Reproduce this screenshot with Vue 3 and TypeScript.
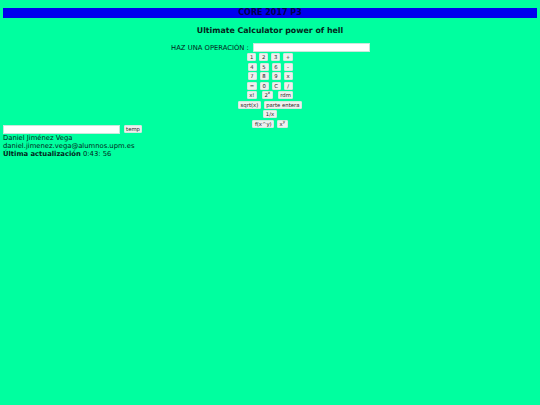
<script setup lang="ts">
const rows: string[][] = [
  ['1', '2', '3', '+'],
  ['4', '5', '6', '-'],
  ['7', '8', '9', 'x'],
  ['=', '0', 'C', '/'],
]
const rowsB: string[][] = [['sqrt(x)', 'parte entera'], ['1/x']]
</script>

<template>
  <main class="page">
    <h1 class="bar">CORE 2017 P3</h1>
    <h2 class="title">Ultimate Calculator power of hell</h2>
    <div class="op">
      <span>HAZ UNA OPERACIÓN :</span>
      <input class="field" type="text" />
    </div>
    <div class="pad">
      <div v-for="(r, i) in rows" :key="i" class="row">
        <button v-for="k in r" :key="k" class="key">{{ k }}</button>
      </div>
      <div class="row wide">
        <button class="key">x!</button>
        <button class="key">2<sup>x</sup></button>
        <button class="key">rdm</button>
      </div>
      <div v-for="(r, i) in rowsB" :key="'b' + i" class="row">
        <button v-for="k in r" :key="k" class="key">{{ k }}</button>
      </div>
      <div class="row">
        <button class="key">f(x^y)</button>
        <button class="key">x<sup>y</sup></button>
      </div>
    </div>
    <div class="temp">
      <input class="field" type="text" />
      <button class="key slim">temp</button>
    </div>
    <div class="info">
      <div>Daniel Jiménez Vega</div>
      <div>daniel.jimenez.vega@alumnos.upm.es</div>
      <div><b>Última actualización</b> 0:43: 56</div>
    </div>
  </main>
</template>

<style>
html, body { margin: 0; background: #00ff9f; }
</style>

<style scoped>
.page {
  box-sizing: border-box;
  height: 405px;
  padding: 8px 3px 0;
  background: #00ff9f;
  color: #03241a;
  font-family: "DejaVu Sans", sans-serif;
  font-size: 6.8px;
  line-height: 8px;
}
.bar {
  margin: 0;
  height: 10px;
  line-height: 10px;
  background: #0000ee;
  color: #00004a;
  font-size: 8px;
  font-weight: 700;
  text-align: center;
}
.title {
  margin: 7px 0 0;
  height: 11px;
  line-height: 11px;
  font-size: 7.85px;
  font-weight: 700;
  text-align: center;
  color: #02261a;
}
.op {
  display: flex;
  justify-content: center;
  align-items: center;
  gap: 4px;
  margin-top: 7px;
  height: 9px;
  padding-left: 1px;
}
.field {
  box-sizing: border-box;
  width: 117px;
  height: 9px;
  padding: 0;
  border: 1px solid #c8e8dc;
  border-radius: 0;
  background: #fff;
}
.pad {
  display: flex;
  flex-direction: column;
  align-items: center;
  gap: 1.5px;
  margin-top: 1px;
}
.row {
  display: flex;
  justify-content: center;
  gap: 3px;
}
.wide {
  gap: 5px;
}
.key {
  box-sizing: border-box;
  min-width: 9px;
  height: 8px;
  padding: 0 1.5px;
  border: 1px solid #d5e8e0;
  border-radius: 1px;
  background: #efefef;
  color: #222;
  font-family: "DejaVu Sans", sans-serif;
  font-size: 5.3px;
  line-height: 6px;
}
.key sup {
  font-size: 4px;
  line-height: 0;
}
.slim {
  width: 18px;
  padding: 0;
}
.temp {
  display: flex;
  align-items: center;
  gap: 4px;
  margin-top: -3px;
}
.info {
  margin-top: 0;
}
</style>
